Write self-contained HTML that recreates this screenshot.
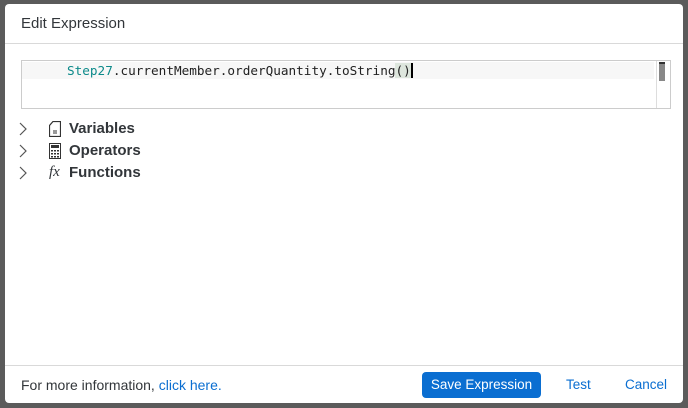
<!DOCTYPE html>
<html><head><style>
body{margin:0;width:688px;height:408px;background:#5b5b5b;position:relative;overflow:hidden;font-family:"Liberation Sans",sans-serif;}
.dlg{position:absolute;left:5px;top:4px;width:678px;height:399px;background:#fff;border-radius:4px;}
.hdr{position:absolute;left:0;top:0;width:100%;height:39px;border-bottom:1px solid #d9d9d9;}
.hdr span{position:absolute;left:16px;top:11px;font-size:15px;color:#32363a;}
.ed{position:absolute;left:16px;top:56px;width:648px;height:47px;border:1px solid #ccc;}
.line{position:absolute;left:0;top:1px;width:632px;height:17px;background:#f7f7f7;}
.code{position:absolute;left:45px;top:2px;font-family:"DejaVu Sans Mono","Liberation Mono",monospace;font-size:12.7px;color:#222;letter-spacing:0;}
.code b{font-weight:normal;color:#0c8a8a}
.code i{font-style:normal;background:#dde6dd;border-right:2px solid #000}
.sb{position:absolute;right:0;top:0;width:13px;height:47px;border-left:1px solid #ddd;}
.sb div{position:absolute;left:2px;top:1px;width:6px;height:17px;background:#888;border-top:2px solid #333}
.row{position:absolute;left:14px;font-size:15px;font-weight:bold;color:#32363a;}
.row .ch{position:absolute;left:0;top:2px;}
.row .t{position:absolute;left:50px;top:0;}
.ftr{position:absolute;left:0;top:361px;width:100%;height:38px;border-top:1px solid #d9d9d9;}
.ftr .i{position:absolute;left:16px;top:11px;font-size:14px;color:#32363a}
.ftr a{color:#0a6ed1;text-decoration:none}
.btn{position:absolute;left:417px;top:6px;width:119px;height:26px;background:#0a6ed1;border-radius:4px;color:#fff;font-size:13.5px;text-align:center;line-height:26px}
.lk{position:absolute;top:11px;font-size:13.5px;color:#0a6ed1}
</style></head><body>
<div class="dlg">
<div class="hdr"><span>Edit Expression</span></div>
<div class="ed"><div class="line"></div><div class="code"><b>Step27</b>.currentMember.orderQuantity.toString<i>()</i></div><div class="sb"><div></div></div></div>
<div class="row" style="top:116px"><svg class="ch" width="8" height="14"><path d="M1 1l6 6-6 6" fill="none" stroke="#555" stroke-width="1.2"/></svg>
<svg style="position:absolute;left:30px;top:1px" width="12" height="16"><path d="M4 .5h7.5v15h-11v-11z" fill="none" stroke="#333" stroke-width="1.2"/><path d="M4 10h4M4 12h4" stroke="#333"/></svg><span class="t">Variables</span></div>
<div class="row" style="top:138px"><svg class="ch" width="8" height="14"><path d="M1 1l6 6-6 6" fill="none" stroke="#555" stroke-width="1.2"/></svg>
<svg style="position:absolute;left:30px;top:1px" width="12" height="16"><rect x=".5" y=".5" width="11" height="15" fill="none" stroke="#333"/><rect x="2" y="2" width="8" height="3" fill="#333"/><path d="M2 7h2v1.5H2zM5 7h2v1.5H5zM8 7h2v1.5H8zM2 10h2v1.5H2zM5 10h2v1.5H5zM8 10h2v1.5H8zM2 13h2v1.5H2zM5 13h2v1.5H5zM8 13h2v1.5H8z" fill="#333"/></svg><span class="t">Operators</span></div>
<div class="row" style="top:160px"><svg class="ch" width="8" height="14"><path d="M1 1l6 6-6 6" fill="none" stroke="#555" stroke-width="1.2"/></svg>
<span style="position:absolute;left:30px;top:0;font-family:'Liberation Serif',serif;font-style:italic;font-weight:normal;font-size:15px">fx</span><span class="t">Functions</span></div>
<div class="ftr"><span class="i">For more information, <a>click here.</a></span>
<div class="btn">Save Expression</div><span class="lk" style="left:561px">Test</span><span class="lk" style="left:620px">Cancel</span></div>
</div>
</body></html>
